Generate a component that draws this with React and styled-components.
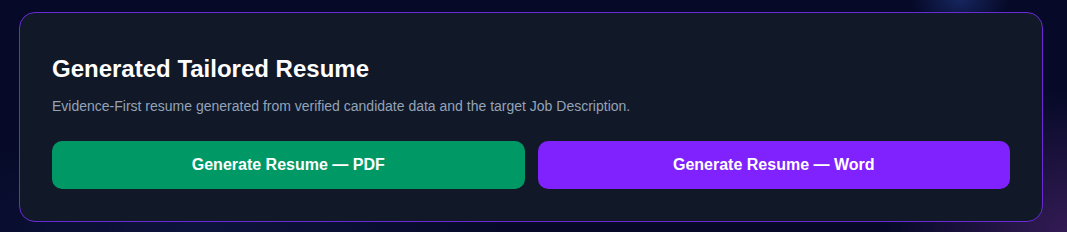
import React from "react";
import styled, { createGlobalStyle } from "styled-components";

const GlobalStyle = createGlobalStyle`
  html, body {
    margin: 0;
    padding: 0;
    height: 100%;
  }
  body {
    font-family: "Liberation Sans", Arial, sans-serif;
    background-color: #060a28;
    background-image:
      radial-gradient(ellipse 260px 200px at 1067px 232px, rgba(88, 40, 120, 0.55), transparent 70%),
      radial-gradient(ellipse 60px 40px at 960px 0px, rgba(40, 70, 160, 0.45), transparent 80%),
      radial-gradient(ellipse 400px 140px at 200px 232px, rgba(20, 30, 80, 0.5), transparent 80%);
    min-height: 232px;
  }
`;

const Page = styled.div`
  padding: 12px 0 0 19px;
`;

const Card = styled.section`
  width: 1024px;
  box-sizing: border-box;
  background: #111827;
  border: 1px solid #6a2ad8;
  border-radius: 16px;
  padding: 40px 32px 32px;
  display: flex;
  flex-direction: column;
`;

const Title = styled.h2`
  margin: 0;
  font-size: 24px;
  line-height: 32px;
  font-weight: 700;
  color: #ffffff;
`;

const Subtitle = styled.p`
  margin: 11px 0 0;
  font-size: 14px;
  line-height: 20px;
  color: #94a3b8;
`;

const Actions = styled.div`
  margin-top: 25px;
  display: grid;
  grid-template-columns: 1fr 1fr;
  gap: 13px;
`;

const ActionButton = styled.button`
  height: 48px;
  border: none;
  border-radius: 10px;
  background: ${(p) => (p.$variant === "word" ? "#7f22fe" : "#009966")};
  color: #ffffff;
  font-family: "Liberation Sans", Arial, sans-serif;
  font-size: 16px;
  font-weight: 700;
  cursor: pointer;
`;

export default function App() {
  return (
    <>
      <GlobalStyle />
      <Page>
        <Card>
          <Title>Generated Tailored Resume</Title>
          <Subtitle>
            Evidence-First resume generated from verified candidate data and the target Job Description.
          </Subtitle>
          <Actions>
            <ActionButton $variant="pdf">Generate Resume — PDF</ActionButton>
            <ActionButton $variant="word">Generate Resume — Word</ActionButton>
          </Actions>
        </Card>
      </Page>
    </>
  );
}
